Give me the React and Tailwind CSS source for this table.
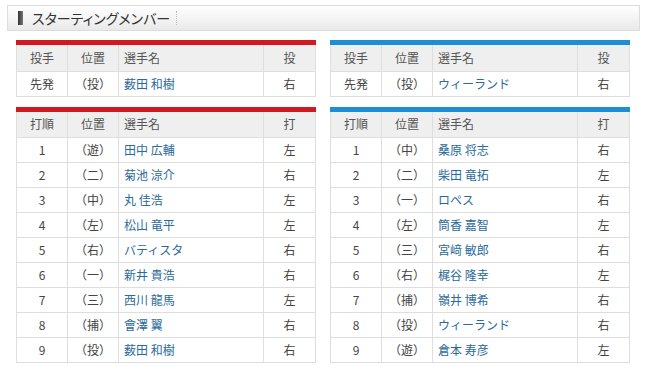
import React from 'react'

const home = {
  pitcher: { name: '薮田 和樹', hand: '右' },
  lineup: [
    ['1', '（遊）', '田中 広輔', '左'],
    ['2', '（二）', '菊池 涼介', '右'],
    ['3', '（中）', '丸 佳浩', '左'],
    ['4', '（左）', '松山 竜平', '左'],
    ['5', '（右）', 'バティスタ', '右'],
    ['6', '（一）', '新井 貴浩', '右'],
    ['7', '（三）', '西川 龍馬', '左'],
    ['8', '（捕）', '會澤 翼', '右'],
    ['9', '（投）', '薮田 和樹', '右'],
  ],
}

const away = {
  pitcher: { name: 'ウィーランド', hand: '右' },
  lineup: [
    ['1', '（中）', '桑原 将志', '右'],
    ['2', '（二）', '柴田 竜拓', '左'],
    ['3', '（一）', 'ロペス', '右'],
    ['4', '（左）', '筒香 嘉智', '左'],
    ['5', '（三）', '宮﨑 敏郎', '右'],
    ['6', '（右）', '梶谷 隆幸', '左'],
    ['7', '（捕）', '嶺井 博希', '右'],
    ['8', '（投）', 'ウィーランド', '右'],
    ['9', '（遊）', '倉本 寿彦', '左'],
  ],
}

function LineupTable({ bar, headers, rows }) {
  return (
    <div className="w-[300px]">
      <div className={`h-[5px] ${bar}`} />
      <table className="w-full border-collapse table-fixed text-[12px] text-[#444]">
        <colgroup>
          <col className="w-[51px]" />
          <col className="w-[51px]" />
          <col />
          <col className="w-[52px]" />
        </colgroup>
        <thead>
          <tr className="h-[26px] bg-[#efefef] text-[#555]">
            <th className="border border-[#dedede] border-t-0 font-normal text-center">{headers[0]}</th>
            <th className="border border-[#dedede] border-t-0 font-normal text-center">{headers[1]}</th>
            <th className="border border-[#dedede] border-t-0 font-normal text-left pl-[5px]">{headers[2]}</th>
            <th className="border border-[#dedede] border-t-0 font-normal text-center">{headers[3]}</th>
          </tr>
        </thead>
        <tbody>
          {rows.map((r, i) => (
            <tr key={i} className="h-[25px] bg-white">
              <td className="border border-[#dedede] text-center">{r[0]}</td>
              <td className="border border-[#dedede] text-center">{r[1]}</td>
              <td className="border border-[#dedede] text-left pl-[5px] text-[#2a6a9a]">{r[2]}</td>
              <td className="border border-[#dedede] text-center">{r[3]}</td>
            </tr>
          ))}
        </tbody>
      </table>
    </div>
  )
}

export default function App() {
  const red = 'bg-[#cf1a22]'
  const blue = 'bg-[#1b8fd2]'
  return (
    <div className="w-[650px] h-[371px] bg-white pt-[5px] font-['Noto_Sans_CJK_JP','Noto_Sans',sans-serif] overflow-hidden">
      <div className="mx-[7px] mr-[10px] h-[26px] border border-[#dcdcdc] bg-gradient-to-b from-white to-[#e9e9e9] flex items-center pl-[10px]">
        <div className="w-[5px] h-[14px] bg-gradient-to-r from-[#333] to-[#777]" />
        <span className="ml-[9px] text-[14px] text-[#333] leading-none [font-feature-settings:'palt']">スターティングメンバー</span>
        <span className="ml-[6px] h-[14px] border-l border-dotted border-[#bbb]" />
      </div>

      <div className="flex gap-[14px] pl-[16px] mt-[9px]">
        <LineupTable bar={red} headers={['投手', '位置', '選手名', '投']} rows={[['先発', '（投）', home.pitcher.name, home.pitcher.hand]]} />
        <LineupTable bar={blue} headers={['投手', '位置', '選手名', '投']} rows={[['先発', '（投）', away.pitcher.name, away.pitcher.hand]]} />
      </div>

      <div className="flex gap-[14px] pl-[16px] mt-[10px]">
        <LineupTable bar={red} headers={['打順', '位置', '選手名', '打']} rows={home.lineup} />
        <LineupTable bar={blue} headers={['打順', '位置', '選手名', '打']} rows={away.lineup} />
      </div>
    </div>
  )
}
